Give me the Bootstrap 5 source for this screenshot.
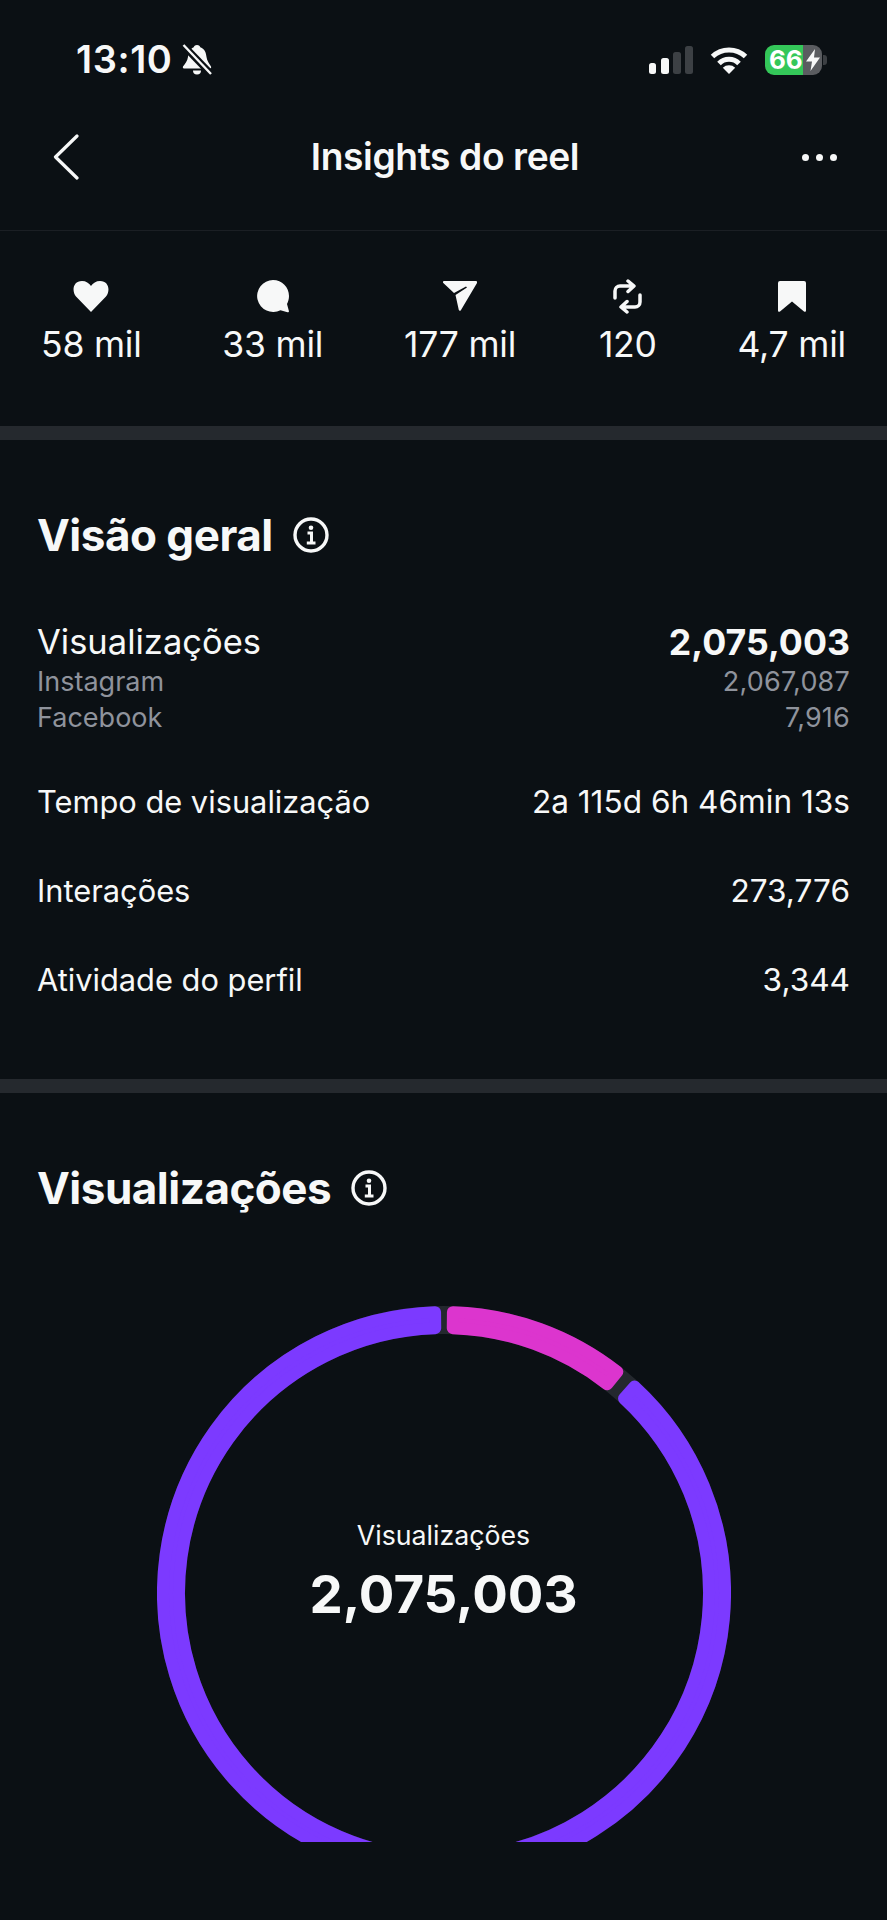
<!DOCTYPE html>
<html lang="pt">
<head>
    <meta charset="UTF-8">
    <title>Insights do reel</title>
    <link href="https://cdn.jsdelivr.net/npm/bootstrap@5.3.0/dist/css/bootstrap.min.css" rel="stylesheet">
    <style>
        body { background: #0b1014; color: #f7f8f8; font-family: Inter, "Noto Sans", sans-serif; min-height: 1920px; }
        svg { display: block; flex-shrink: 0; }

        /* status bar */
        .status-bar { height: 84px; padding: 35px 60px 0 76px; }
        .status-time { font-size: 38px; font-weight: 600; line-height: 49px; letter-spacing: .6px; }
        .bell-icon { margin-left: 9px; }
        .status-right { margin-left: auto; }
        .status-gap { margin-left: 17px; }
        .batt-box { width: 57px; height: 30px; border-radius: 9px; overflow: hidden; }
        .batt-fill { width: 38px; background: #34c759; font-size: 26px; font-weight: 700; line-height: 30px; color: #fff; padding-left: 4px; letter-spacing: -.2px; }
        .batt-rest { width: 19px; background: #5a5c60; }
        .batt-tip { width: 4px; height: 10px; background: #3c3f43; border-radius: 0 3px 3px 0; margin-left: 1px; }

        /* top nav */
        .top-nav { height: 147px; padding: 0 50px 0 53px; border-bottom: 1px solid #1b1f24; }
        .nav-side { width: 60px; }
        .nav-title { font-size: 37.2px; font-weight: 600; letter-spacing: -.4px; }
        .more-dots { gap: 7px; }
        .more-dots i { width: 7px; height: 7px; border-radius: 50%; background: #f7f8f8; }

        /* counters */
        .stats-row { height: 195px; padding: 47px 41px 0 41px; }
        .cell-a { flex: 0 0 98px; }
        .cell-b { flex: 0 0 112px; }
        .cell-c { flex: 0 0 58px; margin-left: 2px; }
        .cell-d { flex: 0 0 104px; }
        .stat-icon { height: 36px; }
        .stat-num { font-size: 35.5px; line-height: 44px; margin-top: 9px; white-space: nowrap; letter-spacing: -.2px; }
        .thick-line { height: 14px; background: #25292e; }

        /* sections */
        .block { padding: 70px 37px 0; }
        .block-head { font-size: 44px; font-weight: 700; line-height: 50px; letter-spacing: -.5px; margin: 0; }
        .info-icon { margin-left: 20px; }
        .metric-list { margin-top: 60px; padding-bottom: 77px; }
        .metric-main { font-size: 34.5px; line-height: 44px; }
        .metric-main b { font-size: 35.7px; font-weight: 700; }
        .metric-sub { font-size: 27px; line-height: 35.5px; color: #8f939c; }
        .metric-sub span + span { letter-spacing: .2px; }
        .metric-row { font-size: 30.8px; line-height: 44px; margin-top: 45px; }
        .metric-row span + span { font-size: 31.6px; }

        /* donut */
        .donut-wrap { width: 574px; height: 536px; margin: 93px 0 0 119.5px; }
        .donut-text { top: 212px; left: 0; right: 0; }
        .donut-label { font-size: 26.7px; line-height: 34px; }
        .donut-num { font-size: 52.8px; font-weight: 700; line-height: 66px; margin-top: 9px; }
    </style>
</head>
<body>

<svg width="0" height="0" class="position-absolute">
    <symbol id="info" viewBox="0 0 36 36">
        <circle cx="18" cy="18" r="16" fill="none" stroke="#f7f8f8" stroke-width="3.4"/>
        <circle cx="18" cy="10.8" r="2.3" fill="#f7f8f8"/>
        <path d="M14.5 16H18.5V25.5M13.8 26H22.5" fill="none" stroke="#f7f8f8" stroke-width="3"/>
    </symbol>
</svg>

<div class="status-bar d-flex align-items-center">
    <span class="status-time">13:10</span>
    <svg class="bell-icon" width="30" height="31" viewBox="0 0 30 31">
        <path fill="#f7f8f8" d="M15 1c2 0 3 1 3.3 2.3C23 5 24 9 24.5 13c.4 4 3 7 4.5 9.5.4 1 0 2-1 2H2c-1 0-1.4-1-1-2C3 20 5.5 17 6 13 6.5 9 7.5 5 11.7 3.3 12 2 13 1 15 1Z"/>
        <path fill="#f7f8f8" d="M11 26.5h8a4 4 0 0 1-8 0Z"/>
        <path d="M1 1 29 30" stroke="#0b1014" stroke-width="7"/>
        <path d="M1.5 1 29 30" stroke="#f7f8f8" stroke-width="2.4"/>
    </svg>
    <div class="status-right d-flex align-items-center">
        <svg width="44" height="28" viewBox="0 0 44 28">
            <rect x="0" y="17" width="7" height="11" rx="2.5" fill="#f7f8f8"/>
            <rect x="12" y="12" width="8" height="16" rx="2.5" fill="#f7f8f8"/>
            <rect x="24" y="6" width="8" height="22" rx="2.5" fill="#3c4044"/>
            <rect x="36" y="0" width="8" height="28" rx="2.5" fill="#3c4044"/>
        </svg>
        <svg class="status-gap" width="38" height="28" viewBox="0 0 38 28">
            <path d="M2.5 10.5A24 24 0 0 1 35.5 10.5" fill="none" stroke="#f7f8f8" stroke-width="5"/>
            <path d="M9 17.5A14 14 0 0 1 29 17.5" fill="none" stroke="#f7f8f8" stroke-width="5"/>
            <path fill="#f7f8f8" d="M19 28 12.8 21.8A9 9 0 0 1 25.2 21.8Z"/>
        </svg>
        <div class="status-gap d-flex align-items-center">
            <div class="batt-box d-flex">
                <div class="batt-fill">66</div>
                <div class="batt-rest d-flex align-items-center justify-content-center">
                    <svg width="14" height="22" viewBox="0 0 14 22"><path fill="#f7f8f8" d="M9 0 0 12.5H6L4.5 22 14 8.5H8Z"/></svg>
                </div>
            </div>
            <div class="batt-tip"></div>
        </div>
    </div>
</div>

<div class="top-nav d-flex align-items-center justify-content-between">
    <div class="nav-side">
        <svg width="26" height="46" viewBox="0 0 26 46">
            <path d="M24 2 2.5 23 24 44" fill="none" stroke="#f7f8f8" stroke-width="3.2" stroke-linecap="round" stroke-linejoin="round"/>
        </svg>
    </div>
    <div class="nav-title">Insights do reel</div>
    <div class="nav-side more-dots d-flex justify-content-end"><i></i><i></i><i></i></div>
</div>

<div class="stats-row d-flex justify-content-between">
    <div class="cell-a d-flex flex-column align-items-center">
        <div class="stat-icon d-flex align-items-center">
            <svg width="36" height="31" viewBox="0 0 36 31"><path fill="#f7f8f8" d="M18 31 3 15.5C-1.5 10 0 0 9 0c4 0 7 2 9 5 2-3 5-5 9-5 9 0 10.5 10 6 15.5Z"/></svg>
        </div>
        <div class="stat-num">58 mil</div>
    </div>
    <div class="cell-a d-flex flex-column align-items-center">
        <div class="stat-icon d-flex align-items-center">
            <svg width="32" height="33" viewBox="0 0 32 33"><path fill="#f7f8f8" d="M16 0c9 0 16 7 16 16 0 3-.8 5.6-2 8l1.9 7c.2.9-.5 1.5-1.4 1.2l-7-2A16 16 0 1 1 16 0Z"/></svg>
        </div>
        <div class="stat-num">33 mil</div>
    </div>
    <div class="cell-b d-flex flex-column align-items-center">
        <div class="stat-icon d-flex align-items-center">
            <svg width="34" height="30" viewBox="0 0 34 30"><path fill="#f7f8f8" d="M1 0H33C34 0 34.5 1 34 2L18 29C17.4 30.2 16 30 15.8 29L12.5 14 24 6.5 23 5.5 11 12 .3 2C-.3 1 0 0 1 0Z"/></svg>
        </div>
        <div class="stat-num">177 mil</div>
    </div>
    <div class="cell-c d-flex flex-column align-items-center">
        <div class="stat-icon d-flex align-items-center">
            <svg width="29" height="35" viewBox="0 0 29 35" fill="none" stroke="#f7f8f8" stroke-width="3.5" stroke-linecap="round" stroke-linejoin="round">
                <path d="M2 19V12A5 5 0 0 1 7 7H20M15 2 21 7 15 12.5"/>
                <path d="M27 16V23A5 5 0 0 1 22 28H9M14 33 8 28 14 22.5"/>
            </svg>
        </div>
        <div class="stat-num">120</div>
    </div>
    <div class="cell-d d-flex flex-column align-items-center">
        <div class="stat-icon d-flex align-items-center">
            <svg width="28" height="31" viewBox="0 0 28 31"><path fill="#f7f8f8" d="M2 0H26A2 2 0 0 1 28 2V29.5C28 30.7 27 31.2 26 30.5L14 20.5 2 30.5C1 31.2 0 30.7 0 29.5V2A2 2 0 0 1 2 0Z"/></svg>
        </div>
        <div class="stat-num">4,7 mil</div>
    </div>
</div>

<div class="thick-line"></div>

<section class="block">
    <div class="d-flex align-items-center">
        <h2 class="block-head">Visão geral</h2>
        <svg class="info-icon" width="36" height="36"><use href="#info"/></svg>
    </div>
    <div class="metric-list">
        <div class="metric-main d-flex justify-content-between"><span>Visualizações</span><b>2,075,003</b></div>
        <div class="metric-sub d-flex justify-content-between"><span>Instagram</span><span>2,067,087</span></div>
        <div class="metric-sub d-flex justify-content-between"><span>Facebook</span><span>7,916</span></div>
        <div class="metric-row d-flex justify-content-between"><span>Tempo de visualização</span><span>2a 115d 6h 46min 13s</span></div>
        <div class="metric-row d-flex justify-content-between"><span>Interações</span><span>273,776</span></div>
        <div class="metric-row d-flex justify-content-between"><span>Atividade do perfil</span><span>3,344</span></div>
    </div>
</section>

<div class="thick-line"></div>

<section class="block">
    <div class="d-flex align-items-center">
        <h2 class="block-head">Visualizações</h2>
        <svg class="info-icon" width="36" height="36"><use href="#info"/></svg>
    </div>
    <div class="donut-wrap position-relative">
        <svg id="donut" width="574" height="536" viewBox="0 0 574 536">
            <circle cx="287" cy="287" r="273" fill="none" stroke="#24282e" stroke-width="28"/>
        </svg>
        <div class="donut-text position-absolute text-center">
            <div class="donut-label">Visualizações</div>
            <div class="donut-num">2,075,003</div>
        </div>
    </div>
</section>

<script>
    // segments of the ring, degrees clockwise from the top
    const segments = [
        { from: 0.6, to: 39.3, color: "#dc35ce" },
        { from: 41.5, to: 359.4, color: "#7c3aff" }
    ];
    const svg = document.getElementById("donut");

    function pt(r, deg) {
        const a = deg * Math.PI / 180;
        return (287 + r * Math.sin(a)).toFixed(2) + " " + (287 - r * Math.cos(a)).toFixed(2);
    }

    segments.forEach(function (s) {
        // corner radius 6: inset shape, then a 12px round-joined stroke
        const dOut = 6 / 281 * 180 / Math.PI, dIn = 6 / 265 * 180 / Math.PI;
        const big = s.to - s.from > 180 ? 1 : 0;
        const d = "M" + pt(281, s.from + dOut) + "A281 281 0 " + big + " 1 " + pt(281, s.to - dOut) +
            "L" + pt(265, s.to - dIn) + "A265 265 0 " + big + " 0 " + pt(265, s.from + dIn) + "Z";
        const p = document.createElementNS("http://www.w3.org/2000/svg", "path");
        p.setAttribute("d", d);
        p.setAttribute("fill", s.color);
        p.setAttribute("stroke", s.color);
        p.setAttribute("stroke-width", "12");
        p.setAttribute("stroke-linejoin", "round");
        svg.appendChild(p);
    });
</script>

<script src="https://cdn.jsdelivr.net/npm/bootstrap@5.3.0/dist/js/bootstrap.bundle.min.js"></script>
</body>
</html>
